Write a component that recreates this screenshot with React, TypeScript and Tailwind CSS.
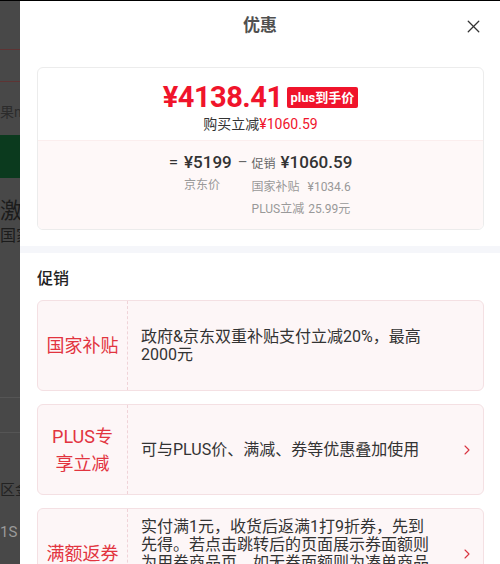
import { X, ChevronRight } from 'lucide-react';

const FONT = "font-['Roboto','Noto_Sans_CJK_SC',sans-serif]";

interface PromoProps {
  label: string;
  text: string;
  arrow?: boolean;
}

const PromoCard = ({ label, text, arrow }: PromoProps) => {
  return (
    <div className="flex min-h-[91px] rounded-md border border-[#f4e0e3] bg-[#fdf6f7]">
      {/* Label column with dashed divider */}
      <div className="flex w-[90px] shrink-0 items-center justify-center border-r border-dashed border-[#f0d3d8] px-[6px] text-center text-[18px] leading-[27px] text-[#e2343f]">
        {label}
      </div>
      <div className="flex flex-1 items-center py-2 pl-[13px] pr-[22px] text-[16px] leading-[18px] text-[#333]">
        {text}
      </div>
      <div className="mr-[8px] flex w-[16px] shrink-0 items-center justify-center">
        {arrow && <ChevronRight size={22} strokeWidth={1.6} className="text-[#d9333f]" />}
      </div>
    </div>
  );
};

const App = () => {
  return (
    <div className={`flex h-[564px] w-[500px] flex-col overflow-hidden bg-[#484848] ${FONT}`}>
      <div className="h-px bg-black" />
      <div className="flex flex-1 overflow-hidden">
        {/* Dimmed page behind the sheet */}
        <div className="flex w-[20px] shrink-0 flex-col overflow-hidden whitespace-nowrap bg-[#484848]">
          <div className="mt-[48px] h-px bg-[#5e3434]" />
          <div className="mt-[31px] h-px bg-[#5e3434]" />
          <div className="mt-[22px] text-[14px] leading-[16px] text-[#2c2c2c]">果n3</div>
          <div className="mt-[15px] h-[43px] bg-[#0b3a1e]" />
          <div className="mt-[21px] text-[22px] leading-[24px] text-[#1b1b1b]">激</div>
          <div className="mt-[4px] text-[16px] leading-[18px] text-[#1b1b1b]">国家</div>
          <div className="mt-[152px] h-[36px] border-y border-[#555]" />
          <div className="mt-[48px] text-[15px] leading-[18px] text-[#222]">区金</div>
          <div className="mt-[24px] text-[15px] leading-[18px] text-[#9a9a9a]">1S</div>
        </div>

        {/* Sheet */}
        <div className="flex-1 bg-white">
          <div className="grid h-[50px] grid-cols-[1fr_auto_1fr] items-center">
            <div />
            <div className="text-[17px] font-bold text-[#505050]">优惠</div>
            <div className="flex justify-end pr-[16px]">
              <X size={21} strokeWidth={1.5} className="text-[#333]" />
            </div>
          </div>

          <div className="pl-[17px] pr-4 pt-4">
            <div className="overflow-hidden rounded-md border border-[#ececec]">
              <div className="flex flex-col items-center pb-[6px] pt-[12px]">
                <div className="flex h-[34px] items-center">
                  <span className="text-[29px] font-bold leading-[34px] tracking-[-0.5px] text-[#f0142b]">¥4138.41</span>
                  <span className="ml-[4px] rounded-[2px] bg-[#f0142b] px-[4px] text-[13px] font-bold leading-[21px] text-white">plus到手价</span>
                </div>
                <div className="text-[14px] leading-[20px] text-[#333]">
                  购买立减<span className="text-[#f0142b]">¥1060.59</span>
                </div>
              </div>
              <div className="flex justify-center border-t border-[#fbeeee] bg-[#fef8f8] pb-[11px] pt-[10px]">
                <div className="flex items-start">
                  <span className="mr-[6px] text-[17px] leading-[22px] text-[#333]">=</span>
                  <div className="flex flex-col">
                    <span className="text-[17px] font-medium leading-[22px] text-[#333]">¥5199</span>
                    <span className="mt-[3px] text-[12px] leading-[18px] text-[#999]">京东价</span>
                  </div>
                  <span className="ml-[6px] mr-[4px] text-[15px] leading-[22px] text-[#666]">–</span>
                  <div className="flex flex-col">
                    <div className="flex items-baseline">
                      <span className="text-[12px] leading-[22px] text-[#666]">促销</span>
                      <span className="ml-[5px] text-[17px] font-medium leading-[22px] text-[#333]">¥1060.59</span>
                    </div>
                    <span className="mt-[3px] text-[12px] leading-[18px] text-[#999]">
                      国家补贴<span className="ml-[8px]">¥1034.6</span>
                    </span>
                    <span className="mt-[4px] text-[12px] leading-[18px] text-[#999]">
                      PLUS立减<span className="ml-[4px]">25.99元</span>
                    </span>
                  </div>
                </div>
              </div>
            </div>
          </div>

          <div className="mt-4 h-[7px] bg-[#f5f6fa]" />

          <div className="pl-[17px] pr-4 pt-[15px]">
            <div className="mb-[10px] text-[16px] font-medium leading-[22px] text-[#222]">促销</div>
            <div className="flex flex-col gap-[13px]">
              <PromoCard label="国家补贴" text="政府&京东双重补贴支付立减20%，最高2000元" />
              <PromoCard label="PLUS专享立减" text="可与PLUS价、满减、券等优惠叠加使用" arrow />
              <PromoCard
                label="满额返券"
                text="实付满1元，收货后返满1打9折券，先到先得。若点击跳转后的页面展示券面额则为用券商品页，如无券面额则为凑单商品页。"
                arrow
              />
            </div>
          </div>
        </div>
      </div>
    </div>
  );
};

export default App;
